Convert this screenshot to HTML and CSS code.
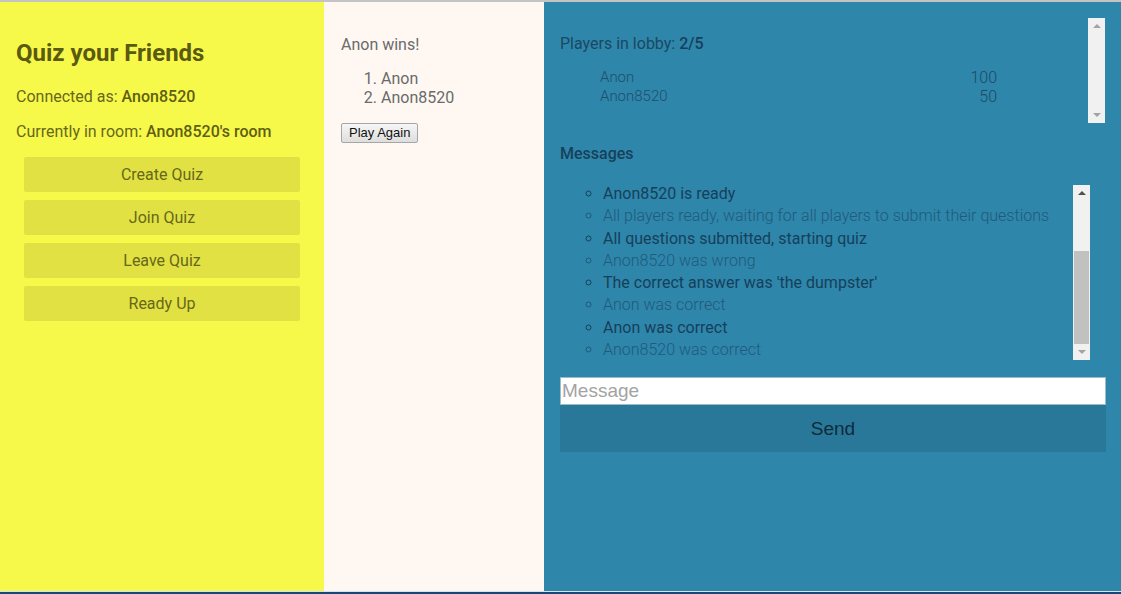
FILE: index.html
```html
<!DOCTYPE html>
<html>
<head>
<meta charset="utf-8">
<link rel="stylesheet" href="styles.css">
</head>
<body>
<div class="app">
  <aside class="sidebar">
    <h1 class="title">Quiz your Friends</h1>
    <p class="info">Connected as: <b>Anon8520</b></p>
    <p class="info">Currently in room: <b>Anon8520's room</b></p>
    <div class="actions">
      <button class="action">Create Quiz</button>
      <button class="action">Join Quiz</button>
      <button class="action">Leave Quiz</button>
      <button class="action">Ready Up</button>
    </div>
  </aside>
  <section class="results">
    <p class="winner">Anon wins!</p>
    <ol class="ranking">
      <li>Anon</li>
      <li>Anon8520</li>
    </ol>
    <button class="play-again">Play Again</button>
  </section>
  <section class="chat">
    <div class="lobby">
      <div class="lobby-content">
        <p class="lobby-title">Players in lobby: <b>2/5</b></p>
        <table class="players">
          <tr><td class="pname">Anon</td><td class="pscore">100</td></tr>
          <tr><td class="pname">Anon8520</td><td class="pscore">50</td></tr>
        </table>
      </div>
      <div class="scrollbar">
        <span class="arrow up light"></span>
        <span class="track"></span>
        <span class="arrow down light"></span>
      </div>
    </div>
    <h2 class="messages-title">Messages</h2>
    <div class="messages">
      <div class="messages-content">
        <ul class="message-list">
          <li class="strong">Anon8520 is ready</li>
          <li class="soft">All players ready, waiting for all players to submit their questions</li>
          <li class="strong">All questions submitted, starting quiz</li>
          <li class="soft">Anon8520 was wrong</li>
          <li class="strong">The correct answer was 'the dumpster'</li>
          <li class="soft">Anon was correct</li>
          <li class="strong">Anon was correct</li>
          <li class="soft">Anon8520 was correct</li>
        </ul>
      </div>
      <div class="scrollbar">
        <span class="arrow up dark"></span>
        <span class="track"><span class="thumb"></span></span>
        <span class="arrow down light"></span>
      </div>
    </div>
    <input class="message-input" type="text" placeholder="Message">
    <button class="send">Send</button>
  </section>
</div>
<div class="taskbar"></div>
</body>
</html>
```

FILE: styles.css
```css
html, body {
  margin: 0;
  padding: 0;
  height: 594px;
  overflow: hidden;
  font-family: Roboto, "Noto Sans", sans-serif;
}
body {
  display: flex;
  flex-direction: column;
  border-top: 2px solid #c4c4c4;
  box-sizing: border-box;
  background: #fff;
}
.app {
  flex: 1;
  display: flex;
  min-height: 0;
}
.taskbar {
  height: 2px;
  border-top: 1px solid #d8e2ea;
  background: #14477a;
}

/* Sidebar */
.sidebar {
  width: 324px;
  box-sizing: border-box;
  background: #f7f94a;
  padding: 16px;
  color: #67671a;
}
.title {
  font-size: 24px;
  font-weight: 700;
  margin: 21px 0 20px;
  line-height: 28px;
  color: #5a5a10;
}
.info {
  font-size: 16px;
  margin: 0 0 16px;
  line-height: 19px;
}
.info b { font-weight: 500; color: #5f5f12; }
.actions {
  display: flex;
  flex-direction: column;
  gap: 8px;
  padding: 0 8px;
}
.action {
  height: 35px;
  border: none;
  border-radius: 2px;
  background: #e1e143;
  color: #67671a;
  font-family: Roboto, sans-serif;
  font-size: 16px;
}

/* Results */
.results {
  width: 220px;
  box-sizing: border-box;
  background: #fff8f2;
  padding: 16px 16px 16px 17px;
  color: #6a6a6a;
  font-size: 16px;
}
.winner {
  margin: 17px 0 15px;
  line-height: 19px;
}
.ranking {
  margin: 0 0 15px;
  padding-left: 40px;
  line-height: 19px;
}
.play-again {
  font-family: Arial, "Liberation Sans", sans-serif;
  font-size: 13px;
  color: #111;
  padding: 1px 7px;
  height: 20px;
  border: 1px solid #a6a6a6;
  border-radius: 2px;
  background: linear-gradient(#f6f6f6, #dedede);
}

/* Chat */
.chat {
  flex: 1;
  background: #2e86ab;
  padding: 16px 15px 0 16px;
  color: #17425a;
  display: flex;
  flex-direction: column;
}
.lobby {
  display: flex;
  height: 105px;
  margin-right: 1px;
}
.lobby-content {
  flex: 1;
}
.lobby-title {
  margin: 16px 0 15px;
  font-size: 16px;
  line-height: 19px;
  color: #1a4862;
}
.lobby-title b { font-weight: 500; color: #17405a; }
.players {
  border-collapse: collapse;
  margin-left: 38px;
  width: 401px;
}
.players td {
  padding: 0 2px;
  line-height: 19px;
}
.pname { font-size: 15px; color: #1f4f6a; font-weight: 300; }
.pscore { text-align: right; font-size: 16px; color: #1c4a64; font-weight: 300; }

.scrollbar {
  width: 17px;
  background: #f1f1f1;
  display: flex;
  flex-direction: column;
}
.scrollbar .track {
  flex: 1;
  display: flex;
  flex-direction: column;
  justify-content: flex-end;
  padding: 0 1px;
}
.thumb {
  height: 93px;
  background: #c1c1c1;
  display: block;
}
.arrow {
  height: 16px;
  position: relative;
}
.arrow::after {
  content: "";
  position: absolute;
  left: 5px;
  width: 0;
  height: 0;
  border-left: 4px solid transparent;
  border-right: 4px solid transparent;
}
.arrow.up::after { top: 6px; border-bottom: 4px solid #a3a3a3; }
.arrow.down::after { top: 6px; border-top: 4px solid #a3a3a3; }
.arrow.up.dark::after { border-bottom-color: #505050; }

.messages-title {
  font-size: 16px;
  font-weight: 500;
  margin: 21px 0 22px;
  line-height: 19px;
  color: #17405a;
}
.messages {
  display: flex;
  height: 175px;
  width: 530px;
}
.messages-content {
  flex: 1;
}
.message-list {
  margin: -1px 0 0;
  padding-left: 43px;
  list-style: circle;
  font-size: 16px;
}
.message-list li {
  line-height: 19px;
  margin-bottom: 3.3px;
}
.message-list .strong { color: #16405a; }
.message-list .soft { color: #215a7a; font-weight: 300; }

.message-input {
  margin-top: 17px;
  height: 28px;
  box-sizing: border-box;
  border: 1px solid #9cbccc;
  padding: 0 1px;
  font-family: Arial, "Liberation Sans", sans-serif;
  font-size: 19px;
  background: #fff;
  outline: none;
}
.message-input::placeholder { color: #a3a3a3; }
.send {
  height: 47px;
  border: none;
  background: #2a7899;
  color: #0e2b3c;
  font-family: Arial, "Liberation Sans", sans-serif;
  font-size: 19px;
}
```
